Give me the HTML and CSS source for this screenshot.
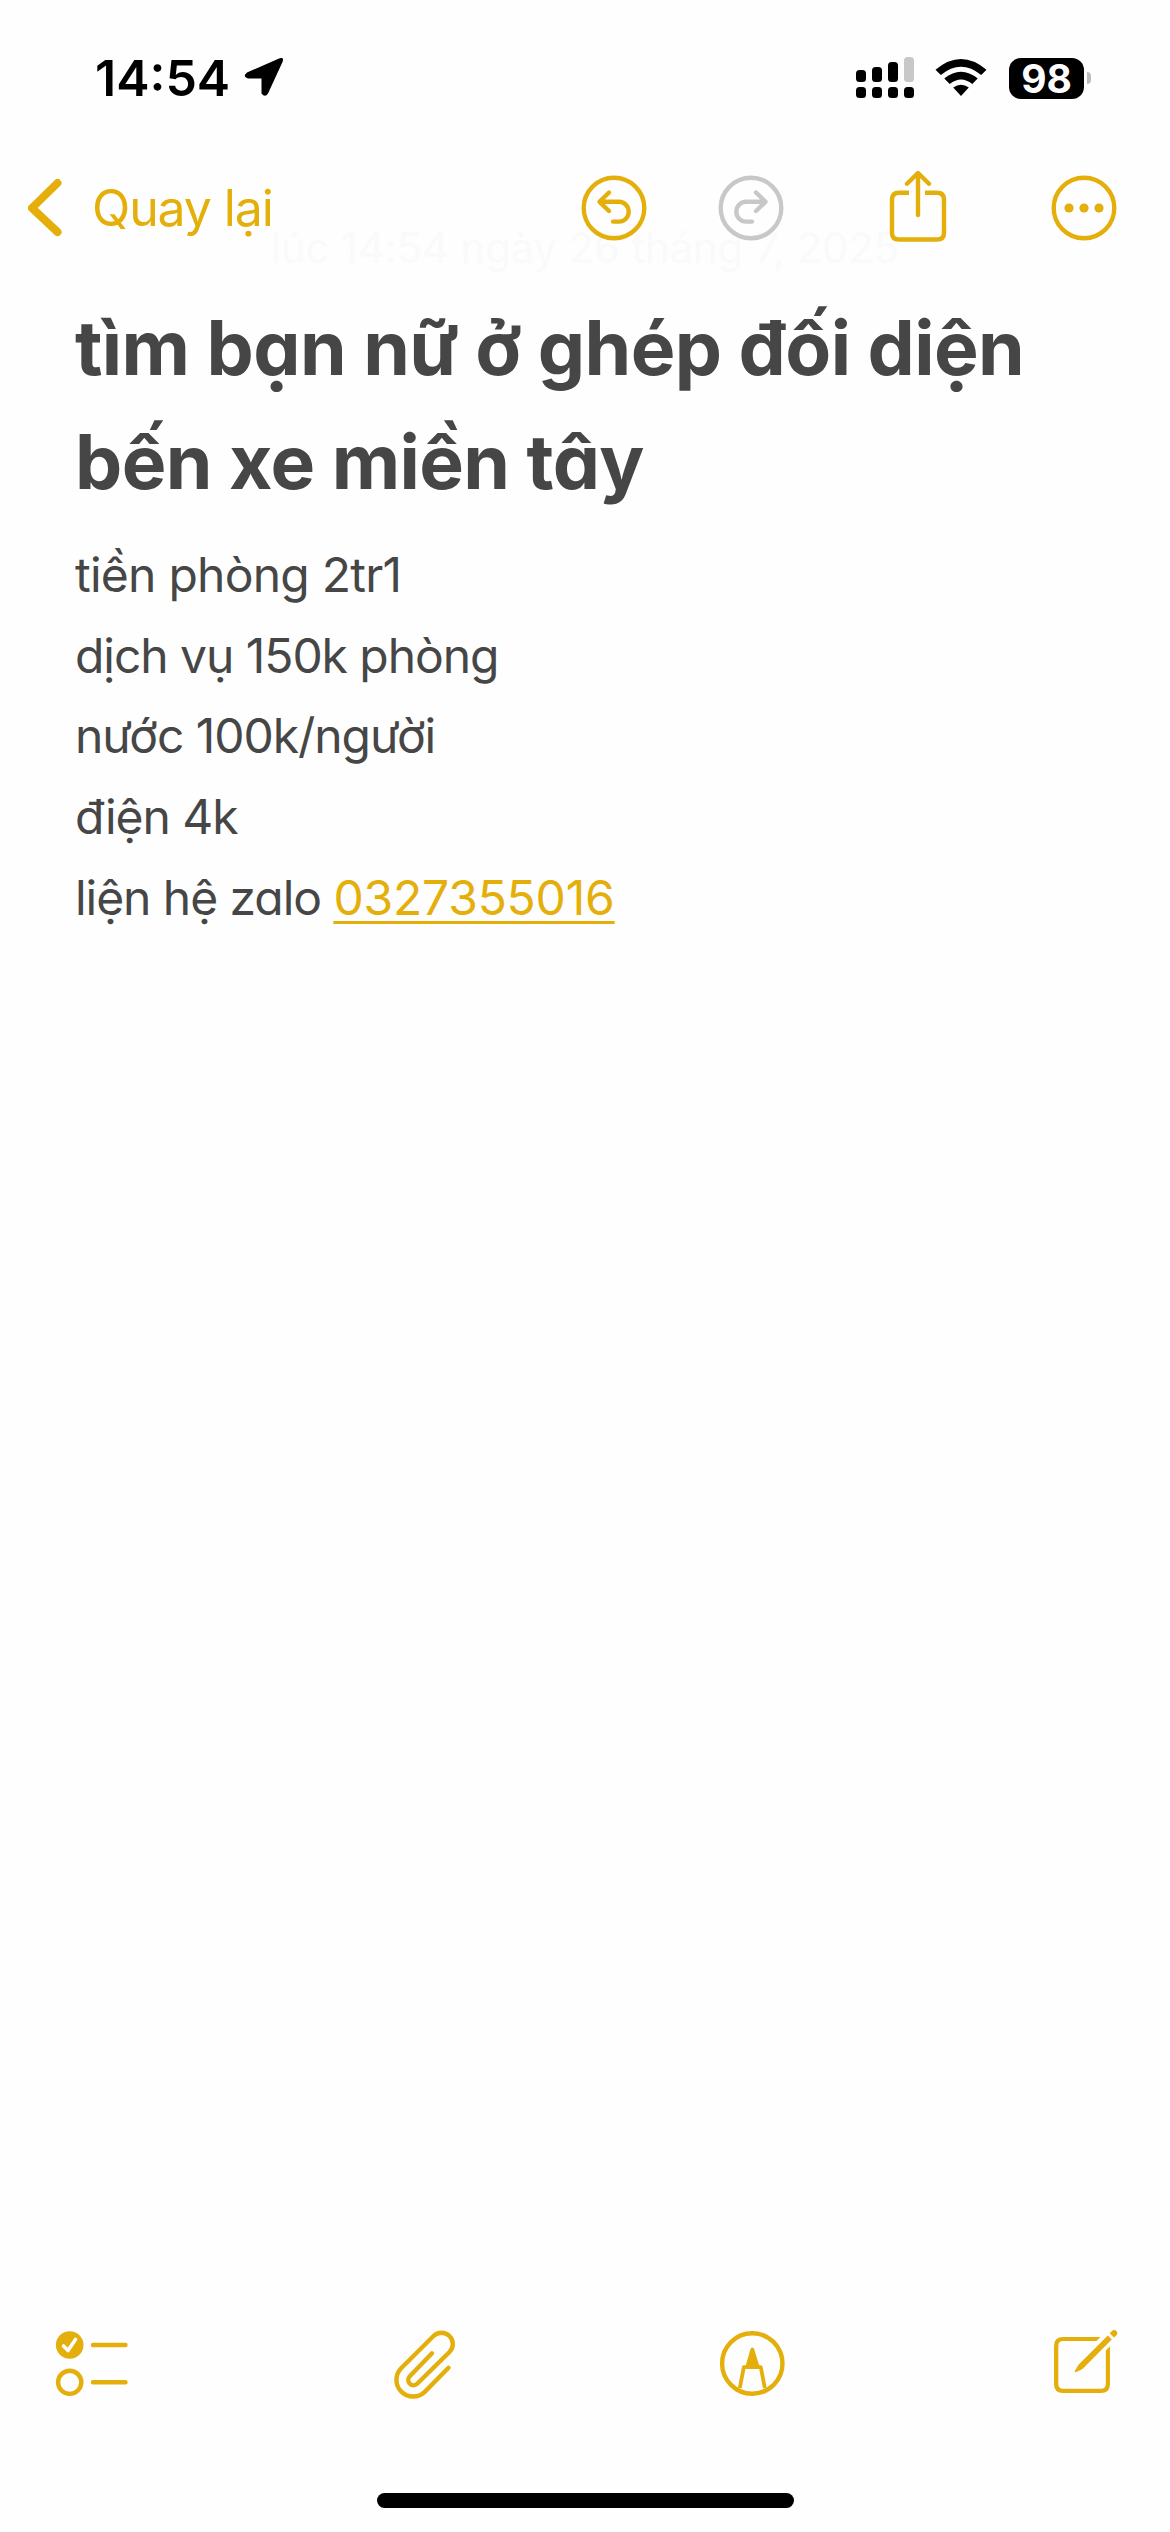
FILE: index.html
```html
<!DOCTYPE html>
<html lang="vi">
<head>
    <meta charset="UTF-8">
    <title>Ghi chú</title>
    <link rel="stylesheet" href="styles.css">
</head>
<body>
    <header class="status-bar">
        <span class="time">14:54</span>
        <svg class="location" width="40" height="40" viewBox="244 59 40 40">
            <path d="M247 103.5 L279 89.5 Q284.500 87.500 282.500 93 L268 124.500 Q265 129 261.500 124.500 L261.500 109.500 L248 109.500 Q242 107.500 247 103.500 Z" transform="translate(0 -30)"/>
        </svg>
        <svg class="signal" width="58" height="42" viewBox="0 0 58 42">
            <rect x="0" y="13" width="10" height="12" rx="3.5"/>
            <rect x="16" y="10" width="10" height="15" rx="3.5"/>
            <rect x="32" y="5" width="10" height="20" rx="3.5"/>
            <rect class="dim" x="48" y="0" width="10" height="25" rx="3.5"/>
            <rect x="0" y="30" width="10" height="11" rx="3.5"/>
            <rect x="16" y="30" width="10" height="11" rx="3.5"/>
            <rect x="32" y="30" width="10" height="11" rx="3.5"/>
            <rect x="48" y="30" width="10" height="11" rx="3.5"/>
        </svg>
        <svg class="wifi" width="52" height="38" viewBox="0 0 52 38">
            <path d="M0.500 10.800 Q26 -10.800 51.500 10.800 L46.200 16 Q26 -0.500 5.800 16 Z"/>
            <path d="M9.300 19.500 Q26 6 42.700 19.500 L37.300 25 Q26 15.800 14.700 25 Z"/>
            <path d="M18.200 28.500 Q26 22.800 33.800 28.500 L26 37 Z"/>
        </svg>
        <span class="battery">98</span>
        <span class="battery-cap"></span>
    </header>

    <nav class="nav">
        <svg class="back" width="34" height="58" viewBox="0 0 34 58">
            <path d="M29.500 4 L4 29 L29.500 53"/>
        </svg>
        <span class="back-label">Quay lại</span>
        <svg class="icon undo" width="66" height="66" viewBox="0 0 66 66">
            <circle cx="33" cy="33" r="30.300"/>
            <path d="M28 17.500 L18.500 26.800 L28 36 M19 26.800 H38 A9.700 9.900 0 0 1 38 46.600 H32"/>
        </svg>
        <svg class="icon redo" width="66" height="66" viewBox="0 0 66 66">
            <circle cx="33" cy="33" r="30.300"/>
            <path d="M38 17.500 L47.500 26.800 L38 36 M47 26.800 H28 A9.700 9.900 0 0 0 28 46.600 H34"/>
        </svg>
        <svg class="icon share" width="58" height="74" viewBox="0 0 58 74">
            <path class="box" d="M20 21.800 H10 Q3 21.800 3 28.800 V62 Q3 68.500 10 68.500 H48 Q55 68.500 55 62 V28.800 Q55 21.800 48 21.800 H36"/>
            <path d="M29 44 V2.500 M18 12.800 L29 2 L40 12.800"/>
        </svg>
        <svg class="icon more" width="66" height="66" viewBox="0 0 66 66">
            <circle cx="33" cy="33" r="30.300"/>
            <circle class="dot" cx="18" cy="33" r="4.600"/>
            <circle class="dot" cx="33" cy="33" r="4.600"/>
            <circle class="dot" cx="48" cy="33" r="4.600"/>
        </svg>
        <span class="date">lúc 14:54 ngày 26 tháng 7, 2025</span>
    </nav>

    <main class="note">
        <h1>tìm bạn nữ ở ghép đối diện<br>bến xe miền tây</h1>
        <p class="rent">tiền phòng 2tr1</p>
        <p>dịch vụ 150k phòng</p>
        <p>nước 100k/người</p>
        <p>điện 4k</p>
        <p>liện hệ zalo <a class="phone">0327355016</a></p>
    </main>

    <footer class="toolbar">
        <svg class="icon checklist" width="74" height="70" viewBox="55 2330 74 70">
            <circle class="dot" cx="69.700" cy="2345" r="13.800"/>
            <path class="tick" d="M63.500 2346 L68 2350.500 L75.500 2339.500"/>
            <circle cx="69.700" cy="2382.300" r="11.600"/>
            <path d="M93 2345 H125.500 M93 2382.300 H125.500"/>
        </svg>
        <svg class="icon clip" width="64" height="70" viewBox="393 2330 64 70">
            <path d="M448.500 2367.800 L424.500 2392.100 A16.700 16.700 0 0 1 400.900 2368.500 L433.500 2336 A11.300 11.300 0 0 1 449.500 2352 L417.200 2383.700 A5.200 5.200 0 0 1 409.800 2376.300 L432 2353.300"/>
        </svg>
        <svg class="icon markup" width="66" height="70" viewBox="719 2330 66 70">
            <circle cx="752.300" cy="2363.500" r="30.200"/>
            <path class="leg" d="M739.800 2388 L743.800 2367.200 H760.800 L764.800 2388"/>
            <path class="dot" d="M745 2368 L750.500 2349 Q752.300 2346.200 754.100 2349 L760 2368 Z"/>
        </svg>
        <svg class="icon compose" width="66" height="70" viewBox="1053 2330 66 70">
            <path class="frame" d="M1100.500 2337 L1096.500 2341 H1063 Q1058.300 2341 1058.300 2346 V2384 Q1058.300 2388.700 1063 2388.700 H1101 Q1105.800 2388.700 1105.800 2384 V2350.500 L1110 2346.300 V2384 Q1110 2393 1101 2393 H1063 Q1054 2393 1054 2384 V2346 Q1054 2337 1063 2337 Z"/>
            <path class="dot" d="M1107.800 2335.500 L1111.800 2339.500 L1082.500 2369 L1075.800 2372.200 Q1074.600 2372.200 1074.800 2371 L1078.500 2364.800 Z"/>
            <path class="dot" d="M1109.700 2333.300 L1112 2331 Q1114.500 2328.800 1116.500 2331.200 Q1118.300 2333.500 1116.200 2335.500 L1114 2337.500 Z"/>
        </svg>
    </footer>
    <div class="home-indicator"></div>
</body>
</html>
```
FILE: styles.css
```css
* {
    box-sizing: border-box;
}
body {
    margin: 0;
    height: 2532px;
    display: flex;
    flex-direction: column;
    background-color: #fefefe;
    color: #464646;
    font-family: Inter, "Liberation Sans", sans-serif;
    overflow: hidden;
}
svg {
    display: block;
    flex: none;
}

/* status bar */
.status-bar {
    height: 156px;
    display: flex;
    align-items: center;
    padding: 0 79px 0 95px;
    color: #000;
}
.time {
    width: 149px;
    font-size: 50px;
    font-weight: 600;
    line-height: 156px;
    white-space: nowrap;
}
.signal {
    margin-left: auto;
}
.signal .dim {
    fill: #c8c8c8;
}
.wifi {
    margin: 0 22px 0 21px;
}
.battery {
    width: 75px;
    height: 41px;
    border-radius: 12px;
    background-color: #000;
    color: #fefefe;
    font-size: 39px;
    font-weight: 700;
    line-height: 41px;
    text-align: center;
}
.battery-cap {
    width: 4px;
    height: 12px;
    margin-left: 3px;
    border-radius: 0 4px 4px 0;
    background-color: #bdbdbd;
}

/* navigation */
.nav {
    position: relative;
    height: 103px;
    display: flex;
    align-items: center;
    padding: 0 53px 0 28px;
}
.back {
    fill: none;
    stroke: #e4af0a;
    stroke-width: 8;
    stroke-linecap: round;
    stroke-linejoin: round;
}
.back-label {
    margin-left: 30px;
    color: #e4af0a;
    font-size: 50px;
    letter-spacing: -1.1px;
    white-space: nowrap;
}
.icon {
    fill: none;
    stroke: #e4af0a;
    stroke-width: 4.4;
    stroke-linecap: round;
    stroke-linejoin: round;
}
.icon .dot {
    fill: #e4af0a;
    stroke: none;
}
.undo {
    margin-left: auto;
}
.redo {
    margin-left: 71px;
    stroke: #c8c8c8;
}
.share {
    margin-left: 105px;
}
.share .box {
    stroke-linecap: butt;
}
.more {
    margin-left: 104px;
}
/* note date fading under the bar */
.date {
    position: absolute;
    left: 271px;
    top: 66px;
    color: #fafafa;
    font-size: 42px;
    letter-spacing: -0.2px;
    white-space: nowrap;
    z-index: -1;
}

/* note */
.note {
    flex: 1;
    padding: 32px 75px 0;
    font-feature-settings: "cv11";
}
h1 {
    margin: 0 0 16px;
    font-size: 75px;
    font-weight: 700;
    line-height: 114px;
    letter-spacing: -0.6px;
    white-space: nowrap;
}
p {
    margin: 0;
    font-size: 48px;
    line-height: 80.7px;
    letter-spacing: -1.05px;
    white-space: nowrap;
}
.rent {
    letter-spacing: -0.75px;
}
.phone {
    color: #e4af0a;
    letter-spacing: -0.2px;
    text-decoration: underline;
    text-decoration-thickness: 3px;
    text-decoration-skip-ink: none;
    text-underline-offset: 6px;
}

/* bottom toolbar */
.toolbar {
    display: flex;
    padding: 0 51px 93px 55px;
}
.clip {
    margin-left: 264px;
}
.markup {
    margin-left: 262px;
}
.compose {
    margin-left: auto;
}
.toolbar .tick {
    stroke: #fefefe;
    stroke-width: 3.6;
}
.toolbar .leg {
    stroke-width: 3.8;
    stroke-linecap: butt;
}
.compose .frame {
    fill: #e4af0a;
    stroke: none;
}
.home-indicator {
    width: 417px;
    height: 15px;
    margin: 0 0 24px 377px;
    border-radius: 8px;
    background-color: #000;
}
```
